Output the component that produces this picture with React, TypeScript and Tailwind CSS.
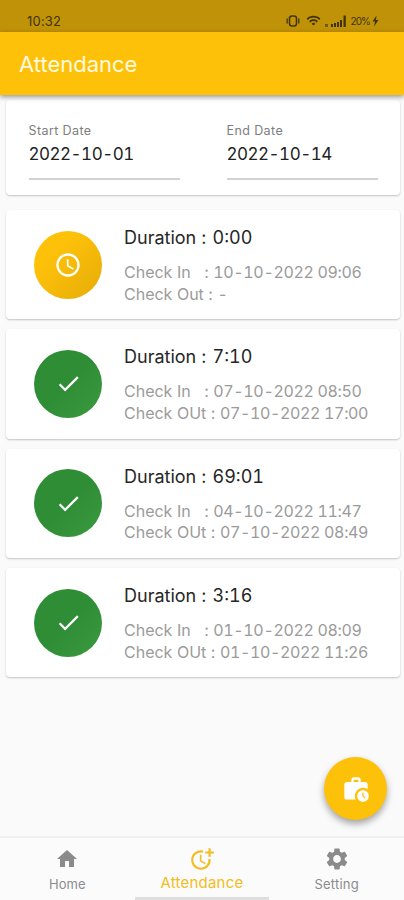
import React from 'react'
import {
  MdAccessTime,
  MdCheck,
  MdHome,
  MdMoreTime,
  MdSettings,
  MdWifi,
  MdWorkHistory
} from 'react-icons/md'

interface AttendanceRecord {
  duration: string
  checkIn: string
  outLabel: string
  checkOut: string
  done: boolean
}

const records: AttendanceRecord[] = [
  { duration: '0:00', checkIn: '10-10-2022 09:06', outLabel: 'Check Out', checkOut: '-', done: false },
  { duration: '7:10', checkIn: '07-10-2022 08:50', outLabel: 'Check OUt', checkOut: '07-10-2022 17:00', done: true },
  { duration: '69:01', checkIn: '04-10-2022 11:47', outLabel: 'Check OUt', checkOut: '07-10-2022 08:49', done: true },
  { duration: '3:16', checkIn: '01-10-2022 08:09', outLabel: 'Check OUt', checkOut: '01-10-2022 11:26', done: true }
]

const StatusBar: React.FC = () => (
  <div className="flex h-8 shrink-0 items-center justify-between bg-[#c09207] pt-[9px] pr-[25px] pl-[27px] text-[#41340c]">
    <span className="text-[13px] leading-4 tracking-[0.2px]">10:32</span>
    <div className="flex items-center">
      <svg width="14" height="12" viewBox="0 0 14 12" fill="none" stroke="currentColor">
        <rect x="3.500" y="1" width="7" height="10" rx="2.500" strokeWidth="1.5" />
        <path d="M1.200 3.500v5M12.800 3.500v5" strokeWidth="1.3" />
      </svg>
      <MdWifi className="ml-[6px] size-[15px]" />
      <svg className="ml-[4px]" width="21" height="12" viewBox="0 0 21 12" fill="currentColor">
        <path d="M0 9h3v3H0z" opacity=".6" />
        <path d="M6 9h2v3H6zM9 8h2v4H9zM12 7h2v5h-2zM15 5h2v7h-2zM18.500 0.500h2.300v11.500h-2.300z" />
      </svg>
      <span className="ml-[4px] text-[10px] leading-3 tracking-[-0.9px]">20%</span>
      <svg className="ml-[2px]" width="7" height="12" viewBox="0 0 7 12" fill="currentColor">
        <path d="M4.500 0.500 0.500 6.500h2.500L2 11.500l4.500-6.500H4z" />
      </svg>
    </div>
  </div>
)

const DateField: React.FC<{ label: string; value: string }> = ({ label, value }) => (
  <div className="w-[151px] border-b-2 border-[#d2d2d2] pb-[13px]">
    <p className="text-[12.5px] leading-4 tracking-[0.4px] text-[#7d7d7d]">{label}</p>
    <p className="mt-[5px] text-[17px] leading-5 tracking-[-0.5px] text-[#222] tabular-nums">{value}</p>
  </div>
)

const RecordCard: React.FC<{ record: AttendanceRecord }> = ({ record }) => (
  <div className="flex h-[109.3px] shrink-0 items-center rounded bg-white pl-7 shadow-[0_1px_2px_rgba(0,0,0,0.22)]">
    <div
      className={
        record.done
          ? 'flex size-[68px] items-center justify-center rounded-full bg-linear-to-br from-[#2f8d36] from-50% to-[#3b9b3f] text-white'
          : 'flex size-[68px] items-center justify-center rounded-full bg-linear-to-br from-[#fec10a] from-30% to-[#e5ac07] text-white'
      }
    >
      {record.done ? <MdCheck className="size-[27px]" /> : <MdAccessTime className="size-[28px]" />}
    </div>
    <div className="ml-[22px] pt-[2px] whitespace-pre">
      <p className="text-[18px] leading-6 text-[#262626]">
        Duration : <span className="ml-px tabular-nums">{record.duration}</span>
      </p>
      <p className="mt-[12px] text-[16px] leading-[21.5px] text-[#9b9b9b]">
        {'Check In   : '}
        <span className="tracking-[-0.35px] tabular-nums">{record.checkIn}</span>
      </p>
      <p className="text-[16px] leading-[21.5px] text-[#9b9b9b]">
        {record.outLabel + ' : '}
        <span className="tracking-[-0.35px] tabular-nums">{record.checkOut}</span>
      </p>
    </div>
  </div>
)

const BottomNav: React.FC = () => (
  <nav className="grid h-16 shrink-0 grid-cols-3 border-t-2 border-[#f0f0f0] bg-[#fbfbfb]">
    <div className="flex flex-col items-center pt-[9px] text-[#8b8b8b]">
      <MdHome className="size-6" />
      <span className="mt-[5px] text-[13px] leading-4">Home</span>
    </div>
    <div className="flex flex-col items-center border-b-[3px] border-[#dedede] pt-[8px] text-[#f2bd22]">
      <MdMoreTime className="size-[26px]" />
      <span className="mt-[3px] text-[15px] leading-4 tracking-[0.2px]">Attendance</span>
    </div>
    <div className="flex flex-col items-center pt-[8px] text-[#8b8b8b]">
      <MdSettings className="size-[26px]" />
      <span className="mt-[4px] text-[13px] leading-4 tracking-[0.2px]">Setting</span>
    </div>
  </nav>
)

const App: React.FC = () => {
  return (
    <div className="relative flex h-[900px] w-[404px] flex-col overflow-hidden bg-[#fafafa] font-['Inter','Liberation_Sans',sans-serif]">
      <StatusBar />
      <header className="z-10 flex h-[63px] shrink-0 items-center bg-[#fec10a] pl-[19px] shadow-[0_2px_5px_rgba(0,0,0,0.4)]">
        <h1 className="text-[22px] leading-7 text-[#fff9df]">Attendance</h1>
      </header>

      {/* Date range */}
      <div className="mr-[4px] ml-[6px] mt-[5px] flex h-[95px] shrink-0 gap-[47px] rounded bg-white pt-[23px] pb-[15px] pl-[22.5px] shadow-[0_1px_2px_rgba(0,0,0,0.22)]">
        <DateField label="Start Date" value="2022-10-01" />
        <DateField label="End Date" value="2022-10-14" />
      </div>

      {/* Records */}
      <main className="mr-[4px] ml-[6px] mt-[15px] flex flex-1 flex-col gap-[10px]">
        {records.map((record, index) => (
          <RecordCard key={index} record={record} />
        ))}
      </main>

      <BottomNav />

      {/* Floating action button */}
      <button className="absolute right-[17px] bottom-[80px] flex size-[63px] items-center justify-center rounded-full bg-[#fec10a] text-white shadow-[0_4px_7px_rgba(0,0,0,0.35)]">
        <MdWorkHistory className="size-[28px]" />
      </button>
    </div>
  )
}

export default App
